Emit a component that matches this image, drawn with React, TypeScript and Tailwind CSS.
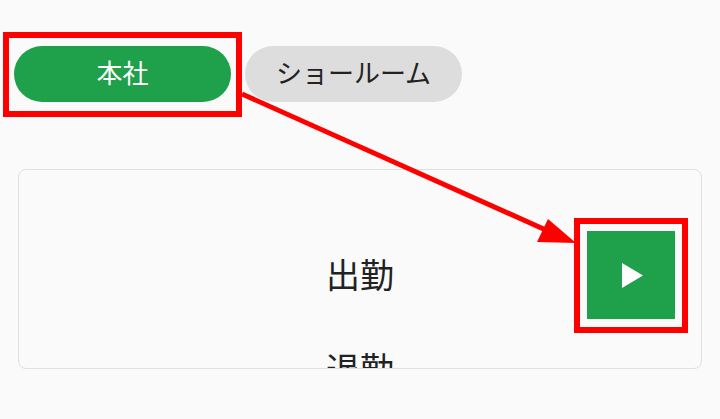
export default function App() {
  return (
    <div
      className="relative w-[720px] h-[419px] overflow-hidden bg-[#fafafa] text-[#222222]"
      style={{ fontFamily: "Roboto, 'Noto Sans CJK JP', sans-serif" }}
    >
      {/* location tabs */}
      <div className="flex gap-[14px] px-[14px] pt-[46px]">
        <button className="w-[217px] h-[56px] rounded-full bg-[#1fa04a] text-white text-[26px] leading-none">
          本社
        </button>
        <button className="w-[217px] h-[56px] rounded-full bg-[#dddddd] text-[#222222] text-[26px] leading-none">
          ショールーム
        </button>
      </div>

      {/* punch list */}
      <div className="relative mx-[18px] mt-[67px] h-[200px] overflow-hidden rounded-[8px] border border-[#e0e0e0] bg-[#fafafa]">
        <div className="flex flex-col items-center pt-[81px] gap-[43px] text-[34px] leading-[51px]">
          <div>出勤</div>
          <div>退勤</div>
        </div>
        <button className="absolute left-[568px] top-[61px] w-[88px] h-[88px] bg-[#1fa04a] flex items-center justify-center">
          <svg width="21" height="25" viewBox="0 0 21 25" className="ml-[3px]">
            <path d="M0 0 L21 12.5 L0 25 Z" fill="#ffffff" />
          </svg>
        </button>
      </div>

      {/* annotations */}
      <div className="absolute left-[3px] top-[32px] w-[239px] h-[85px] border-[6px] border-[#ff0000]" />
      <div className="absolute left-[574px] top-[218px] w-[114px] h-[115px] border-[6px] border-[#ff0000]" />
      <svg className="absolute left-0 top-0" width="720" height="419" viewBox="0 0 720 419">
        <line x1="242" y1="94" x2="548" y2="231" stroke="#ff0000" strokeWidth="5" />
        <polygon points="576,243 548,219 537,242" fill="#ff0000" />
      </svg>
    </div>
  );
}
